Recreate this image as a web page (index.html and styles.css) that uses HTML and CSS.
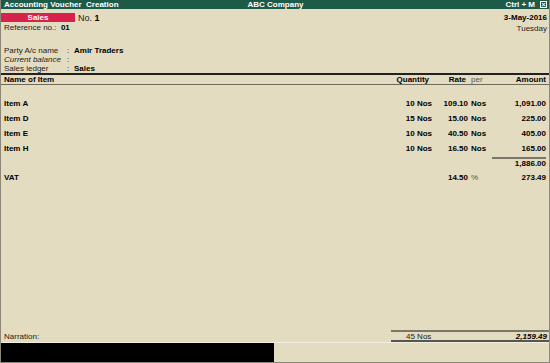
FILE: index.html
```html
<!DOCTYPE html>
<html lang="en">
<head>
    <meta charset="UTF-8">
    <title>Accounting Voucher Creation</title>
    <link rel="stylesheet" href="styles.css">
</head>
<body>
    <div class="window">
        <div class="titlebar">
            <span class="title-left">Accounting Voucher &nbsp;Creation</span>
            <span class="title-center">ABC Company</span>
            <span class="title-right">Ctrl + M <span class="close-box">&#215;</span></span>
        </div>

        <div class="voucher-head">
            <div class="head-left">
                <div class="type-row">
                    <span class="voucher-type">Sales</span>
                    <span class="voucher-no">No. <b>1</b></span>
                </div>
                <div class="ref-row">Reference no.: &nbsp;<b>01</b></div>
            </div>
            <div class="head-right">
                <div class="date">3-May-2016</div>
                <div class="day">Tuesday</div>
            </div>
        </div>

        <div class="party">
            <div class="field"><span class="label">Party A/c name</span><span class="colon">:</span><b>Amir Traders</b></div>
            <div class="field"><span class="label italic">Current balance</span><span class="colon">:</span></div>
            <div class="field"><span class="label">Sales ledger</span><span class="colon">:</span><b>Sales</b></div>
        </div>

        <div class="items">
            <div class="row header">
                <span>Name of Item</span>
                <span class="num qty-head">Quantity</span>
                <span class="num rate-head">Rate</span>
                <span class="per light">per</span>
                <span class="num">Amount</span>
            </div>

            <div class="row item first">
                <span>Item A</span><span class="num">10 Nos</span><span class="num">109.10</span><span class="per">Nos</span><span class="num">1,091.00</span>
            </div>
            <div class="row item">
                <span>Item D</span><span class="num">15 Nos</span><span class="num">15.00</span><span class="per">Nos</span><span class="num">225.00</span>
            </div>
            <div class="row item">
                <span>Item E</span><span class="num">10 Nos</span><span class="num">40.50</span><span class="per">Nos</span><span class="num">405.00</span>
            </div>
            <div class="row item">
                <span>Item H</span><span class="num">10 Nos</span><span class="num">16.50</span><span class="per">Nos</span><span class="num">165.00</span>
            </div>
            <div class="row subtotal">
                <span></span><span></span><span></span><span></span><span class="num sum">1,886.00</span>
            </div>
            <div class="row item">
                <span>VAT</span><span></span><span class="num">14.50</span><span class="per light">%</span><span class="num">273.49</span>
            </div>
        </div>

        <div class="footer">
            <div class="narration">
                <span class="narr-label">Narration:</span>
                <div class="grand">
                    <span class="grand-qty">45 Nos</span>
                    <span class="grand-amt">2,159.49</span>
                </div>
            </div>
            <div class="bottom-strip">
                <div class="black-box"></div>
            </div>
        </div>
    </div>
</body>
</html>
```

FILE: styles.css
```css
* {
    box-sizing: border-box;
}

body {
    margin: 0;
    font-family: "Liberation Sans", Arial, sans-serif;
    font-size: 8px;
    color: #222;
    background-color: #e4dcc0;
}

b {
    color: #000;
}

.window {
    width: 550px;
    height: 363px;
    display: flex;
    flex-direction: column;
    background-color: #e4dcc0;
    border-left: 1px solid #8c8878;
    border-right: 1px solid #8c8878;
    border-bottom: 1px solid #8c8878;
}

.titlebar {
    height: 9px;
    display: grid;
    grid-template-columns: 1fr auto 1fr;
    align-items: center;
    padding: 0 2px 0 3px;
    background-color: #1e5a48;
    color: #fff;
    font-weight: bold;
    line-height: 9px;
}

.title-center {
    text-align: center;
}

.title-right {
    display: flex;
    justify-content: flex-end;
    align-items: center;
    gap: 5px;
}

.close-box {
    width: 7px;
    height: 7px;
    border: 1px solid #fff;
    font-size: 7px;
    line-height: 5px;
    text-align: center;
}

.voucher-head {
    display: flex;
    justify-content: space-between;
    padding: 4px 2px 0 0;
}

.type-row {
    display: flex;
    align-items: center;
    height: 9px;
}

.voucher-type {
    width: 74px;
    height: 9px;
    line-height: 9px;
    background-color: #d8224e;
    color: #fff;
    font-weight: bold;
    text-align: center;
}

.voucher-no {
    padding-left: 3px;
    font-size: 9px;
}

.ref-row {
    padding: 1px 0 0 3px;
}

.head-right {
    text-align: right;
}

.date {
    font-weight: bold;
    color: #000;
    height: 10px;
}

.day {
    padding-top: 1px;
}

.party {
    padding: 13px 0 0 3px;
}

.field {
    display: flex;
    height: 9px;
    line-height: 9px;
}

.label {
    width: 63px;
}

.italic {
    font-style: italic;
}

.colon {
    width: 7px;
}

.items {
    flex: 1;
    border-top: 2px solid #222;
}

.row {
    display: grid;
    grid-template-columns: 1fr 50px 36px 22px 56px;
    padding: 0 3px 0 3px;
    height: 15px;
    align-items: center;
    font-weight: bold;
    color: #000;
}

.row.header {
    height: 10px;
    border-bottom: 1px solid #6f6b5c;
}

.qty-head {
    padding-right: 3px;
}

.rate-head {
    padding-right: 2px;
}

.row.item.first {
    margin-top: 11px;
}

.num {
    text-align: right;
}

.per {
    padding-left: 3px;
}

.light {
    font-weight: normal;
    color: #555;
}

.row.subtotal {
    height: 14px;
}

.sum {
    border-top: 2px solid #7a7668;
    line-height: 10px;
    margin-left: 2px;
}

.footer {
    display: flex;
    flex-direction: column;
}

.narration {
    display: flex;
    justify-content: space-between;
    align-items: flex-end;
    padding-left: 3px;
    height: 12px;
}

.narr-label {
    padding-bottom: 1px;
}

.grand {
    width: 158px;
    height: 12px;
    display: flex;
    justify-content: space-between;
    align-items: center;
    padding: 0 2px 0 15px;
    border-top: 2px solid #7a7668;
    border-bottom: 2px solid #555;
}

.grand-amt {
    font-weight: bold;
    font-style: italic;
    color: #000;
}

.bottom-strip {
    height: 20px;
    border-top: 1px solid #f4efdc;
}

.black-box {
    width: 273px;
    height: 100%;
    background-color: #000;
}
```
